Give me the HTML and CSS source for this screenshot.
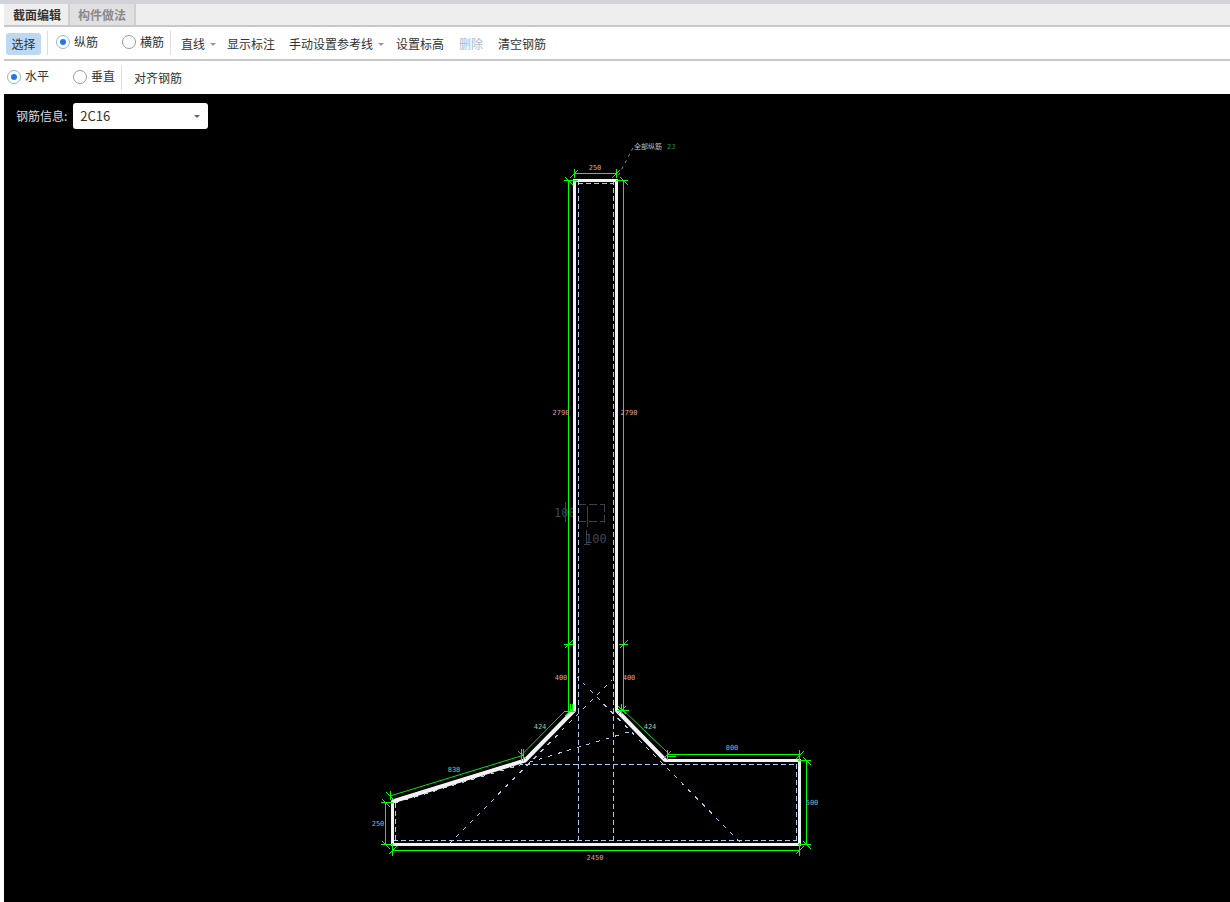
FILE: index.html
```html
<!DOCTYPE html>
<html lang="zh-CN">
<head>
<meta charset="utf-8">
<title>截面编辑</title>
<link rel="stylesheet" href="styles.css">
</head>
<body>
<div class="topstrip"></div>
<div class="main">
  <nav class="tabs">
    <div class="tab tab-active">截面编辑</div>
    <div class="tab tab-idle">构件做法</div>
  </nav>
  <div class="toolbar">
    <button class="btn btn-selected">选择</button>
    <span class="divider"></span>
    <label class="radio radio-first"><span class="dot dot-on"></span>纵筋</label>
    <label class="radio radio-next"><span class="dot"></span>横筋</label>
    <span class="divider divider-r"></span>
    <div class="cmds">
      <span class="cmd cmd-first">直线<i class="caret"></i></span>
      <span class="cmd">显示标注</span>
      <span class="cmd">手动设置参考线<i class="caret caret-long"></i></span>
      <span class="cmd">设置标高</span>
      <span class="cmd cmd-off">删除</span>
      <span class="cmd">清空钢筋</span>
    </div>
  </div>
  <div class="toolbar toolbar-2">
    <label class="radio"><span class="dot dot-on"></span>水平</label>
    <label class="radio radio-next"><span class="dot"></span>垂直</label>
    <span class="divider divider-r"></span>
    <span class="cmd cmd-align">对齐钢筋</span>
  </div>
  <section class="canvas">
    <div class="rebar-field">
      <span class="rebar-label">钢筋信息:</span>
      <div class="select"><span>2C16</span><i class="caret caret-dark"></i></div>
    </div>
    <svg class="drawing" viewBox="4 94 1226 808" width="1226" height="808" xmlns="http://www.w3.org/2000/svg">
      <defs>
        <path id="sf" d="M-4 4L4 -4"/>
        <path id="sb" d="M-4 -4L4 4"/>
      </defs>

      <!-- ghost origin mark -->
      <g class="ghost">
        <path class="ghost-dash" d="M578 504H604M604 504V525M578 521H604"/>
        <path d="M587 506V527M565 502V522M586 530V545M584 544H590"/>
        <text x="554" y="517" class="ghost-text">100</text>
        <text x="585" y="543" class="ghost-text">100</text>
      </g>

      <!-- reference lines -->
      <g class="dash">
        <path d="M578.5 180V845M613.5 180V845M578 183.5H614"/>
        <path d="M525 764.5H797M796.5 764V841M393 840.5H797M395.5 803V841"/>
      </g>
      <g class="dash dash-sparse">
        <path d="M395 803L632 731"/>
        <path d="M449 844L612 680"/>
        <path d="M740 842L577 677"/>
      </g>
      <path class="leader" d="M633 148L617 178"/>

      <!-- section outline -->
      <path class="outline" d="M574.5 180.5H616.5V710L665.5 760.5H799.5V844.5H392.5V801.5L525 760.5L574.5 710Z"/>
      <path class="outline outline-slope" d="M616.5 710L665.5 760.5M392.5 801.5L525 760.5L574.5 710"/>

      <!-- dimension lines -->
      <g class="dim">
        <path d="M574 173.5H616M574.5 169V178M616.5 169V178"/>
        <path d="M564 180.5H578M616 180.5H628"/>
        <path d="M568.5 180V712M564 644.5H573M564 711.5H575M570 704V712M572 704V712"/>
        <path d="M623.5 180V711M619 644.5H628M617 710.5H629M621 704V714"/>
        <path d="M667 754.5H800M667 750V760M667 756.5H676M799.5 750V760"/>
        <path d="M806.5 760V844M798 760.5H811M798 844.5H811"/>
        <path d="M393 850.5H800M392.5 843V856M799.5 843V856"/>
        <path d="M385.5 802V844M381 802.5H393M381 844.5H393"/>
        <path d="M390 791V800M521 749V761M523 749V761"/>
      </g>
      <g class="dim dim-thin">
        <path d="M565 711L521.5 755"/>
        <path d="M521 756L390 796"/>
        <path d="M623 710L667 752"/>
      </g>
      <g class="dim">
        <use href="#sf" x="574" y="174"/><use href="#sf" x="616" y="174"/>
        <use href="#sb" x="569" y="181"/><use href="#sb" x="624" y="181"/>
        <use href="#sf" x="569" y="644"/><use href="#sf" x="624" y="644"/>
        <use href="#sf" x="569" y="712"/><use href="#sf" x="622" y="710"/><use href="#sb" x="622" y="710"/>
        <use href="#sf" x="667" y="755"/><use href="#sf" x="800" y="755"/>
        <use href="#sb" x="807" y="761"/><use href="#sb" x="807" y="845"/>
        <use href="#sf" x="393" y="850"/><use href="#sf" x="800" y="850"/>
        <use href="#sb" x="386" y="803"/><use href="#sb" x="386" y="845"/>
        <use href="#sb" x="390" y="796"/><use href="#sb" x="522" y="755"/>
      </g>

      <!-- dimension labels -->
      <g class="labels">
        <text x="595" y="170" class="warm">250</text>
        <text x="561" y="415" class="warm">2790</text>
        <text x="629" y="415" class="warm">2790</text>
        <text x="561" y="680" class="warm">400</text>
        <text x="629" y="680" class="warm">400</text>
        <text x="540" y="729" class="sage">424</text>
        <text x="650" y="729" class="sage">424</text>
        <text x="454" y="772" class="teal">838</text>
        <text x="732" y="750" class="cyan">800</text>
        <text x="812" y="805" class="cyan">500</text>
        <text x="378" y="826" class="cyan">250</text>
        <text x="595" y="860" class="warm">2450</text>
      </g>
      <text x="634" y="149" class="note">全部纵筋</text>
      <text x="667" y="149" class="note note-2j">2J</text>
    </svg>
  </section>
</div>
</body>
</html>
```
FILE: styles.css
```css
* { box-sizing: border-box; }
html, body { margin: 0; height: 100%; }
body {
  width: 1230px;
  height: 902px;
  overflow: hidden;
  background: #fff;
  font-family: "Noto Sans CJK SC", "Liberation Sans", sans-serif;
  font-size: 12px;
  color: #333;
  display: flex;
  flex-direction: column;
}
.topstrip { height: 4px; background: #d2d2d8; flex: none; }
.main { flex: 1; padding-left: 4px; display: flex; flex-direction: column; min-height: 0; }

.tabs {
  height: 23px;
  flex: none;
  display: flex;
  background: #eeeeee;
  border-bottom: 2px solid #c8c8cc;
}
.tab { width: 66px; height: 21px; line-height: 21px; text-align: center; font-weight: 700; border-right: 2px solid #d0d0d0; }
.tab-active { color: #333; background: #eeeeee; padding-left: 2px; }
.tab-idle { color: #8a8a8a; background: #e0e0e0; }

.toolbar {
  height: 34px;
  flex: none;
  display: flex;
  align-items: center;
  padding-left: 2px;
  background: #fff;
  border-bottom: 2px solid #c8c8cc;
}
.toolbar-2 { height: 33px; padding-left: 3px; border-bottom: 0; }
.btn {
  width: 35px;
  height: 22px;
  padding: 0 0 2px;
  margin-top: 2px;
  border: 0;
  border-radius: 3px;
  background: #bcd8f2;
  font: inherit;
  color: #333;
}
.divider { width: 1px; height: 24px; background: #dddddd; margin-left: 6px; flex: none; }
.divider-r { margin-left: 6px; }
.radio { display: flex; align-items: center; gap: 4px; height: 24px; margin-top: -4px; color: #333; }
.radio-first { margin-left: 8px; }
.radio-next { margin-left: 24px; }
.dot {
  width: 14px;
  height: 14px;
  margin-top: 2px;
  border: 1px solid #9a9a9a;
  border-radius: 50%;
  background: #fff;
  position: relative;
  flex: none;
}
.dot-on { border-color: #8fb4e0; }
.dot-on::after {
  content: "";
  position: absolute;
  left: 3px;
  top: 3px;
  width: 6px;
  height: 6px;
  border-radius: 50%;
  background: #1f7ae0;
}
.cmds { display: flex; align-items: center; gap: 14px; margin-left: 10px; }
.cmd { display: flex; align-items: center; color: #333; }
.cmd-off { color: #a9bacb; margin: 0 1px; }
.cmd-align { margin-left: 12px; }
.caret {
  width: 0;
  height: 0;
  margin-left: 5px;
  margin-right: -3px;
  margin-top: 2px;
  border-left: 3px solid transparent;
  border-right: 3px solid transparent;
  border-top: 3px solid #999;
}
.caret-long { margin-right: -2px; }

.canvas { flex: 1; position: relative; background: #000; min-height: 0; }
.drawing { display: block; }
.rebar-field {
  position: absolute;
  left: 12px;
  top: 9px;
  display: flex;
  align-items: center;
  gap: 6px;
}
.rebar-label { color: #dcdcdc; padding-bottom: 2px; }
.select {
  width: 135px;
  height: 26px;
  padding: 0 8px 2px 7px;
  background: #fff;
  border-radius: 3px;
  display: flex;
  align-items: center;
  justify-content: space-between;
  color: #333;
  font-size: 13px;
}
.caret-dark { border-top-color: #666; margin-right: 0; }

.outline { fill: none; stroke: #f2f2f2; stroke-width: 3; stroke-linejoin: miter; }
.outline-slope { stroke-width: 4; }
.dim { fill: none; stroke: #00ff00; stroke-width: 1; shape-rendering: crispEdges; }
.dim-thin { shape-rendering: auto; stroke-width: 0.9; }
.dash { fill: none; stroke: #a8ccf4; stroke-width: 1; stroke-dasharray: 5 3; shape-rendering: crispEdges; }
.dash-sparse { stroke-dasharray: 4 6; }
.leader { fill: none; stroke: #8a8a8a; stroke-dasharray: 3 4; }
.ghost { fill: none; stroke: #3a4250; stroke-width: 1; shape-rendering: crispEdges; }
.ghost-dash { stroke-dasharray: 8 3; }
.ghost-text { fill: #3f4653; stroke: none; font-family: "DejaVu Sans Mono", monospace; font-size: 12px; }
.labels text { font-family: "DejaVu Sans Mono", monospace; font-size: 7px; text-anchor: middle; }
.warm { fill: #dca0a4; }
.sage { fill: #b0c0a0; }
.teal { fill: #90c0b0; }
.cyan { fill: #80b8cc; }
.note { fill: #b8c0c8; font-family: "Noto Sans CJK SC", sans-serif; font-size: 7px; }
.note-2j { fill: #1f9a50; font-family: "DejaVu Sans Mono", monospace; }
```
